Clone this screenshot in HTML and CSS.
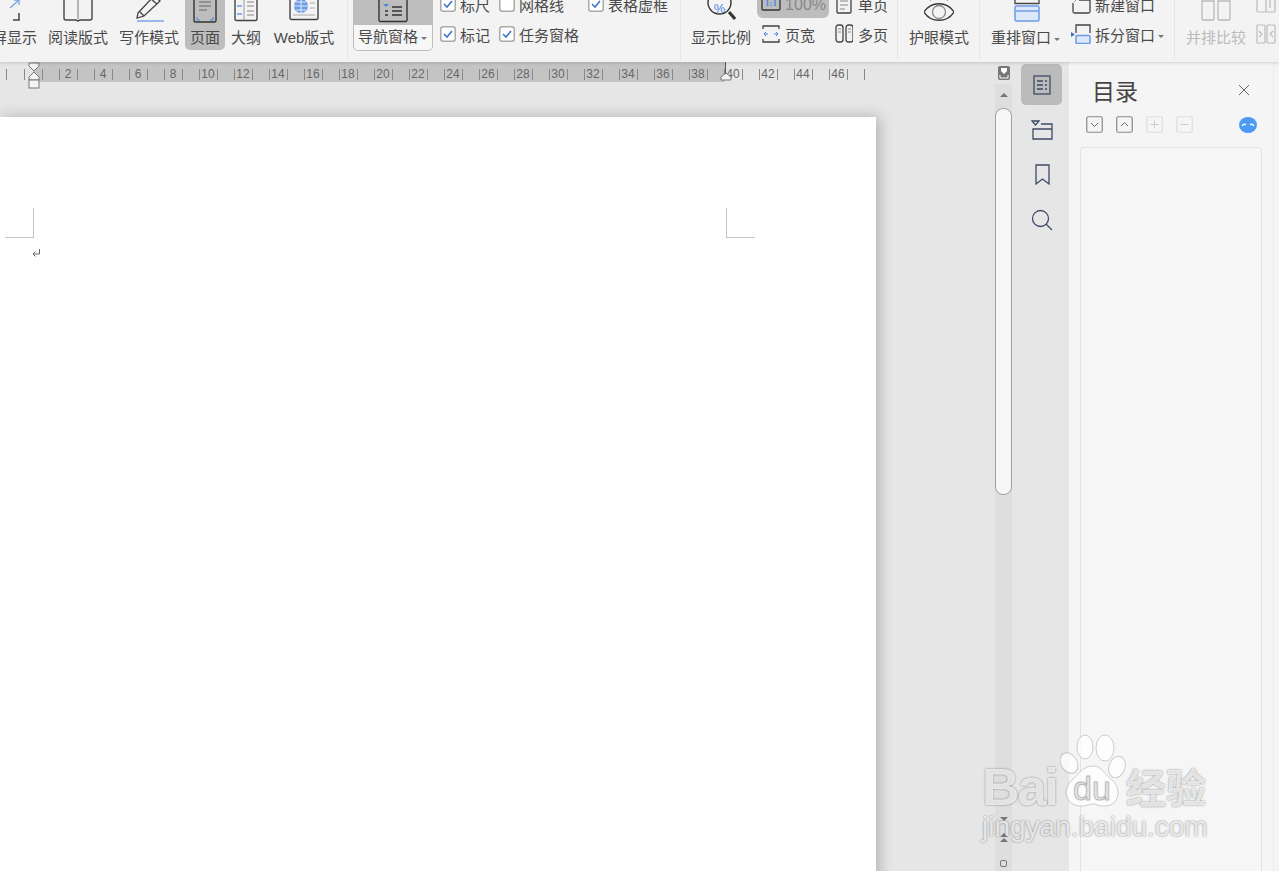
FILE: index.html
```html
<!DOCTYPE html>
<html>
<head>
	<meta charset="utf-8">
	<title>文档</title>
	<link rel="stylesheet" href="styles.css">
</head>
<body>
<!-- 顶部功能区 -->
<div class="ribbon">
	<div class="views">
		<div class="big">
			<svg width="30" height="30" viewBox="0 0 30 30" fill="none"><path d="M18 13l9-8M22 5h5v5M8 15l-6 6M2 16v5h5" stroke="#7aa5e6" stroke-width="1.300"/><path d="M21 25h6v-7" stroke="#444" stroke-width="1.500"/></svg>
			<span>全屏显示</span>
		</div>
		<div class="big">
			<svg class="up2" width="30" height="30" viewBox="0 0 30 30" fill="none" stroke="#444" stroke-width="1.4"><path d="M1 0v26a2 2 0 0 0 2 2h10l2 1 2-1h10a2 2 0 0 0 2-2V0"/><path d="M15 0v27" stroke="#999"/></svg>
			<span>阅读版式</span>
		</div>
		<div class="big">
			<svg class="up2" width="30" height="30" viewBox="0 0 30 30" fill="none" stroke="#444" stroke-width="1.3"><path d="M4 21 20 4l6 5-16 15-7 2z"/><path d="M17 7l6 5M6 20l4 4"/><path d="M3 29h27" stroke="#7aa5e6" stroke-width="1.5"/></svg>
			<span>写作模式</span>
		</div>
		<div class="big active">
			<svg width="30" height="30" viewBox="0 0 30 30" fill="none"><path d="M4 0v25.500a1.500 1.500 0 0 0 1.500 1.500h19a1.500 1.500 0 0 0 1.500-1.500V0" stroke="#333" stroke-width="1.4"/><path d="M9 7h12M9 11h12M9 15h8" stroke="#666"/><path d="M7 22v3h3M23 22v3h-3" stroke="#4a86e0"/></svg>
			<span>页面</span>
		</div>
		<div class="big">
			<svg width="30" height="30" viewBox="0 0 30 30" fill="none"><path d="M4 0v24a1.500 1.500 0 0 0 1.500 1.500h19a1.500 1.500 0 0 0 1.500-1.500V0" stroke="#444" stroke-width="1.400"/><path d="M13 0v25" stroke="#999"/><path d="M6 11h5M6 19h5" stroke="#6d9ce6" stroke-width="1.500"/><path d="M16 7h7M16 11h7M16 16h7M16 20h7" stroke="#888"/></svg>
			<span>大纲</span>
		</div>
		<div class="big big-web">
			<svg class="up2" width="30" height="30" viewBox="0 0 30 30" fill="none"><path d="M1 0v26a1.500 1.500 0 0 0 1.500 1.500h25a1.500 1.500 0 0 0 1.500-1.500V0" stroke="#444" stroke-width="1.400"/><circle cx="12" cy="14" r="7" fill="#6d9ce6"/><path d="M5 14h14M12 7v14M7 10h10M7 18h10" stroke="#fff" stroke-width=".8"/><path d="M21 11h5M21 16h5M4 23h22" stroke="#aaa"/></svg>
			<span>Web版式</span>
		</div>
	</div>
	<i class="sep sep-a"></i>
	<div class="nav">
		<div class="nav-top">
			<svg width="30" height="30" viewBox="0 0 30 30" fill="none"><path d="M1 0v25a1.500 1.500 0 0 0 1.500 1.500h25a1.500 1.500 0 0 0 1.500-1.500V0" stroke="#333" stroke-width="1.400"/><path d="M5 9h6l-3 3z" fill="#4a86e0"/><path d="M7 16h3M7 20h3M14 12h10M14 16h10M14 20h10" stroke="#333" stroke-width="1.300"/></svg>
		</div>
		<div class="nav-label">导航窗格<b class="caret"></b></div>
	</div>
	<div class="checks">
		<label class="check"><svg class="box" width="16" height="16" viewBox="0 0 16 16"><rect x=".75" y=".75" width="14.500" height="14.500" rx="2.500" fill="#fff" stroke="#aaa" stroke-width="1.500"/><path d="M4 8l3 3 5-6" fill="none" stroke="#3f74c9" stroke-width="1.600"/></svg>标尺</label>
		<label class="check"><svg class="box" width="16" height="16" viewBox="0 0 16 16"><rect x=".75" y=".75" width="14.500" height="14.500" rx="2.500" fill="#fff" stroke="#aaa" stroke-width="1.500"/></svg>网格线</label>
		<label class="check"><svg class="box" width="16" height="16" viewBox="0 0 16 16"><rect x=".75" y=".75" width="14.500" height="14.500" rx="2.500" fill="#fff" stroke="#aaa" stroke-width="1.500"/><path d="M4 8l3 3 5-6" fill="none" stroke="#3f74c9" stroke-width="1.600"/></svg>表格虚框</label>
		<label class="check"><svg class="box" width="16" height="16" viewBox="0 0 16 16"><rect x=".75" y=".75" width="14.500" height="14.500" rx="2.500" fill="#fff" stroke="#aaa" stroke-width="1.500"/><path d="M4 8l3 3 5-6" fill="none" stroke="#3f74c9" stroke-width="1.600"/></svg>标记</label>
		<label class="check"><svg class="box" width="16" height="16" viewBox="0 0 16 16"><rect x=".75" y=".75" width="14.500" height="14.500" rx="2.500" fill="#fff" stroke="#aaa" stroke-width="1.500"/><path d="M4 8l3 3 5-6" fill="none" stroke="#3f74c9" stroke-width="1.600"/></svg>任务窗格</label>
	</div>
	<i class="sep"></i>
	<div class="big ml5">
		<svg class="up2" width="30" height="30" viewBox="0 0 30 30" fill="none"><circle cx="13.500" cy="10.500" r="11.500" stroke="#333" stroke-width="1.400"/><path d="M23 20l6 7" stroke="#333" stroke-width="3"/><text x="13.500" y="20.500" class="pct">%</text></svg>
		<span>显示比例</span>
	</div>
	<div class="small-col col-zoom">
		<div class="row row-on">
			<svg width="20" height="20" viewBox="0 0 20 20" fill="none"><rect x="1" y="0" width="18" height="15" rx="1" stroke="#333" stroke-width="1.300"/><text x="4" y="11" class="ratio">1:1</text></svg>
			<span class="muted">100%</span>
		</div>
		<div class="row">
			<svg width="20" height="20" viewBox="0 0 20 20" fill="none"><path d="M2 5V2h16v3M2 15v3h16v-3" stroke="#444" stroke-width="1.300"/><path d="M3 10h4M13 10h4M5 8l-2 2 2 2M15 8l2 2-2 2" stroke="#4a86e0"/></svg>
			<span>页宽</span>
		</div>
	</div>
	<div class="small-col col-page">
		<div class="row">
			<svg width="18" height="20" viewBox="0 0 18 20" fill="none"><path d="M2 0v18a1 1 0 0 0 1 1h12a1 1 0 0 0 1-1V0" stroke="#444" stroke-width="1.300"/><path d="M5 7h8M5 11h8M5 15h5" stroke="#888"/></svg>
			<span>单页</span>
		</div>
		<div class="row">
			<svg width="18" height="20" viewBox="0 0 18 20" fill="none"><rect x="1" y="1" width="7" height="17" rx="2.500" stroke="#444" stroke-width="1.300"/><rect x="11" y="1" width="7" height="17" rx="2.500" stroke="#444" stroke-width="1.300"/><path d="M3 5h3M3 8h3M13 5h3M13 8h3" stroke="#888"/></svg>
			<span>多页</span>
		</div>
	</div>
	<i class="sep"></i>
	<div class="big ml6">
		<svg class="up2" width="30" height="30" viewBox="0 0 30 30" fill="none"><path d="M0 20C7 9 23 9 30 20 23 31 7 31 0 20z" stroke="#333" stroke-width="1.300"/><circle cx="15" cy="20" r="6.500" stroke="#888" stroke-width="1.300"/><path d="M6 8l1 1M15 7v1M24 8l-1 1" stroke="#7aa5e6"/></svg>
		<span>护眼模式</span>
	</div>
	<i class="sep sep-b"></i>
	<div class="big big-wide ml6">
		<svg width="30" height="30" viewBox="0 0 30 30" fill="none"><path d="M2 4v4.500h24V4" stroke="#444" stroke-width="1.300"/><rect x="2" y="11" width="24" height="15" rx="1.500" fill="#dce8fa" stroke="#6d9ce6" stroke-width="1.500"/><path d="M2 16h24" stroke="#6d9ce6" stroke-width="1.500"/></svg>
		<span>重排窗口<b class="caret"></b></span>
	</div>
	<div class="small-col col-win">
		<div class="row">
			<svg width="20" height="20" viewBox="0 0 20 20" fill="none"><path d="M2 9v8.500A1.500 1.500 0 0 0 3.500 19h14a1.500 1.500 0 0 0 1.500-1.500V6H8" stroke="#444" stroke-width="1.300"/><path d="M3 8l3-3" stroke="#7aa5e6"/></svg>
			<span>新建窗口</span>
		</div>
		<div class="row">
			<svg width="20" height="20" viewBox="0 0 20 20" fill="none"><path d="M0 8l4 2.500L0 13z" fill="#3f74c9"/><path d="M5 9V1h14v8" stroke="#444" stroke-width="1.300"/><rect x="5" y="11.500" width="14" height="8" rx="1" fill="#dce8fa" stroke="#6d9ce6" stroke-width="1.500"/></svg>
			<span>拆分窗口<b class="caret"></b></span>
		</div>
	</div>
	<i class="sep"></i>
	<div class="big ml6 off">
		<svg class="up2" width="30" height="30" viewBox="0 0 30 30" fill="none" stroke="#bbb" stroke-width="1.300"><path d="M1 0v27a1 1 0 0 0 1 1h10a1 1 0 0 0 1-1V0M17 0v27a1 1 0 0 0 1 1h10a1 1 0 0 0 1-1V0M1 9h12M17 9h12"/></svg>
		<span>并排比较</span>
	</div>
	<div class="small-col col-last">
		<div class="row">
			<svg width="20" height="20" viewBox="0 0 20 20" fill="none" stroke="#bbb" stroke-width="1.200"><path d="M1 0v17a1 1 0 0 0 1 1h16a1 1 0 0 0 1-1V0M10 0v18M14 6v8"/></svg>
		</div>
		<div class="row">
			<svg width="20" height="20" viewBox="0 0 20 20" fill="none" stroke="#bbb" stroke-width="1.200"><rect x="1" y="1" width="8" height="18" rx="1"/><rect x="11" y="1" width="8" height="18" rx="1"/><path d="M3 7l3 3-3 3M17 7l-3 3 3 3"/></svg>
		</div>
	</div>
</div>

<div class="main">
	<div class="workspace">
		<div class="ruler">
			<div class="cell half"></div>
			<div class="cell"><span></span></div>
			<div class="cell"><span>2</span></div>
			<div class="cell"><span>4</span></div>
			<div class="cell"><span>6</span></div>
			<div class="cell"><span>8</span></div>
			<div class="cell"><span>10</span></div>
			<div class="cell"><span>12</span></div>
			<div class="cell"><span>14</span></div>
			<div class="cell"><span>16</span></div>
			<div class="cell"><span>18</span></div>
			<div class="cell"><span>20</span></div>
			<div class="cell"><span>22</span></div>
			<div class="cell"><span>24</span></div>
			<div class="cell"><span>26</span></div>
			<div class="cell"><span>28</span></div>
			<div class="cell"><span>30</span></div>
			<div class="cell"><span>32</span></div>
			<div class="cell"><span>34</span></div>
			<div class="cell"><span>36</span></div>
			<div class="cell"><span>38</span></div>
			<div class="cell"><span>40</span></div>
			<div class="cell"><span>42</span></div>
			<div class="cell"><span>44</span></div>
			<div class="cell"><span>46</span></div>
			<div class="cell half"></div>
			<svg class="mark-left" width="14" height="27" viewBox="0 0 14 27" fill="#f4f4f4" stroke="#777"><path d="M2 1h10v3l-5 5-5-5z"/><path d="M7 10l5 5v3H2v-3z"/><rect x="2" y="18" width="10" height="8"/></svg>
			<svg class="mark-right" width="12" height="9" viewBox="0 0 12 9" fill="#f4f4f4" stroke="#777"><path d="M6 1l5 4v3H1V5z"/></svg>
			<i class="mark-line"></i>
		</div>
		<div class="canvas">
			<div class="page">
				<div class="corners">
					<i class="corner corner-l"></i>
					<i class="corner corner-r"></i>
				</div>
				<svg class="para" width="9" height="9" viewBox="0 0 9 9" fill="none" stroke="#666"><path d="M7.500 0v5H2"/><path d="M3.500 2.500 1 5l2.500 2.500"/></svg>
			</div>
		</div>
	</div>

	<div class="scroll">
		<svg class="scroll-top" width="12" height="14" viewBox="0 0 12 14"><rect width="12" height="14" rx="2" fill="#777"/><path d="M3 2h6v3L6 8 3 5z" fill="#fff"/><path d="M2 9v3h8V9" fill="none" stroke="#fff"/></svg>
		<i class="arrow-up"></i>
		<div class="thumb"></div>
		<div class="scroll-bottom">
			<i class="arrow-down"></i>
			<i class="arrow-up"></i>
			<i class="arrow-up tight"></i>
			<i class="dot"></i>
		</div>
	</div>

	<div class="tabs">
		<div class="tab tab-on">
			<svg width="20" height="20" viewBox="0 0 20 20" fill="none" stroke="#3f4a66" stroke-width="1.300"><rect x="2" y="1" width="16" height="18"/><path d="M5 6h6M13 6h2M5 10h6M13 10h2M5 14h6M13 14h2"/></svg>
		</div>
		<div class="tab">
			<svg width="22" height="20" viewBox="0 0 22 20" fill="none" stroke="#3f4a66" stroke-width="1.300"><path d="M1 1h7L4.500 5z"/><path d="M10 4h11v15H2V9h19"/></svg>
		</div>
		<div class="tab">
			<svg width="18" height="22" viewBox="0 0 18 22" fill="none" stroke="#3f4a66" stroke-width="1.300"><path d="M3 1h13v19l-6.500-5L3 20z"/></svg>
		</div>
		<div class="tab">
			<svg width="22" height="22" viewBox="0 0 22 22" fill="none" stroke="#3f4a66" stroke-width="1.300"><circle cx="9.500" cy="9.500" r="8"/><path d="M15 15l6 6"/></svg>
		</div>
	</div>

	<div class="panel">
		<div class="panel-head">
			<span class="panel-title">目录</span>
			<svg width="12" height="12" viewBox="0 0 12 12" stroke="#666"><path d="M1 1l10 10M11 1 1 11"/></svg>
		</div>
		<div class="panel-tools">
			<svg class="tool" width="17" height="17" viewBox="0 0 17 17" fill="none" stroke="#888"><rect x=".75" y=".75" width="15.500" height="15.500" rx="1.500" stroke-width="1.200"/><path d="M5 7l3.500 3.500L12 7" stroke="#666"/></svg>
			<svg class="tool" width="17" height="17" viewBox="0 0 17 17" fill="none" stroke="#888"><rect x=".75" y=".75" width="15.500" height="15.500" rx="1.500" stroke-width="1.200"/><path d="M5 10l3.500-3.500L12 10" stroke="#666"/></svg>
			<svg class="tool" width="17" height="17" viewBox="0 0 17 17" fill="none" stroke="#ddd"><rect x=".75" y=".75" width="15.500" height="15.500" rx="1.500" stroke-width="1.200"/><path d="M8.500 4.500v8M4.500 8.500h8" stroke="#ccc"/></svg>
			<svg class="tool" width="17" height="17" viewBox="0 0 17 17" fill="none" stroke="#ddd"><rect x=".75" y=".75" width="15.500" height="15.500" rx="1.500" stroke-width="1.200"/><path d="M4.500 8.500h8" stroke="#ccc"/></svg>
			<svg class="blob" width="18" height="16" viewBox="0 0 18 16"><ellipse cx="9" cy="8" rx="9" ry="8" fill="#4c9af5"/><path d="M3 9q2-3 4-1M11 8q2-2 4 1" fill="none" stroke="#fff" stroke-width="1.300"/></svg>
		</div>
		<div class="panel-box"></div>
	</div>
	<div class="panel-edge"></div>
</div>

<!-- 右下角水印 -->
<div class="mark">
	<div class="mark-top">
		<span class="mark-bai">Bai</span>
		<svg class="paw" width="66" height="76" viewBox="0 0 66 76" fill="#fff" fill-opacity=".75" stroke="#000" stroke-opacity=".18">
			<ellipse cx="9" cy="30" rx="8" ry="11" transform="rotate(-30 9 30)"/>
			<ellipse cx="25" cy="14" rx="8" ry="12"/>
			<ellipse cx="45" cy="15" rx="9" ry="13"/>
			<ellipse cx="57" cy="34" rx="8" ry="11" transform="rotate(20 57 34)"/>
			<path d="M33 33c9 0 11 8 19 14 9 7 9 26-8 26-6 0-7-2-11-2s-6 2-12 2C6 73 2 57 11 48c8-6 11-15 22-15z"/>
			<text x="13" y="67" class="paw-du">du</text>
		</svg>
		<span class="mark-jy">经验</span>
	</div>
	<div class="mark-url">jingyan.baidu.com</div>
</div>
</body>
</html>
```

FILE: styles.css
```css
*{margin: 0;padding: 0;box-sizing: border-box;}
html,body{height: 100%;overflow: hidden;}
body{display: flex;flex-direction: column;background: #e6e6e6;color: #4a4a4a;font-family: "Liberation Sans", "Noto Sans CJK SC", sans-serif;font-size: 15px;}

/* ribbon */
.ribbon{height: 62px;flex: none;display: flex;background: #f3f3f3;overflow: hidden;position: relative;z-index: 1;box-shadow: 0 1px 3px rgba(0,0,0,.15);}
.views{display: flex;gap: 1px;margin-left: -28px;}
.big{height: 50px;padding: 0 5px;flex: none;display: flex;flex-direction: column;justify-content: flex-end;align-items: center;white-space: nowrap;}
.big svg{flex: none;margin-bottom: 1px;}
.big svg.up2{margin-bottom: 4px;}
.big span{line-height: 24px;height: 24px;}
.big.active{background: #bdbdbd;border-radius: 0 0 5px 5px;}
.big.off{color: #bbb;}
.big-web{width: 74px;}
.big-wide{width: 79px;align-items: flex-start;}
.big-wide svg{margin-left: 22px;}
.ml5{margin-left: 5px;}
.ml6{margin-left: 6px;}
.sep{flex: none;width: 1px;height: 60px;background: #e6e6e6;}
.sep-a{margin-left: 6px;}
.sep-b{margin-left: 5px;}
.caret{display: inline-block;width: 0;height: 0;margin-left: 3px;border: 3px solid transparent;border-top: 3px solid #777;border-bottom: 0;vertical-align: middle;}

.nav{flex: none;width: 80px;height: 51px;margin-left: 5px;background: #bdbdbd;border-radius: 0 0 5px 5px;display: flex;flex-direction: column;}
.nav-top{height: 25px;display: flex;justify-content: center;align-items: flex-end;}
.nav-top svg{flex: none;margin-bottom: 0;}
.nav-label{height: 25px;margin: 0 1px 1px;background: #f7f7f7;border-radius: 0 0 4px 4px;line-height: 24px;padding-left: 4px;white-space: nowrap;}

.checks{flex: none;width: 241px;margin: -11px 0 0 6px;display: grid;grid-template-columns: 59px 89px 1fr;grid-auto-rows: 30px;}
.check{display: flex;align-items: center;gap: 4px;white-space: nowrap;}
.box{flex: none;margin-left: 1px;}

.small-col{flex: none;margin-top: -11px;display: flex;flex-direction: column;}
.row{height: 30px;display: flex;align-items: center;gap: 4px;white-space: nowrap;}
.col-zoom{width: 72px;margin-left: 1px;}
.col-zoom .row{padding-left: 4px;}
.row-on{background: #bdbdbd;height: 29px;margin-bottom: 1px;border-radius: 0 0 6px 6px;padding-top: 2px;}
.muted{color: #888;font-size: 16px;}
.col-page{width: 62px;margin-left: 6px;}
.col-page .row{gap: 5px;}
.col-win{width: 103px;margin-left: 6px;}
.col-last{margin-left: 5px;}
.pct{font-family: "Liberation Sans", sans-serif;font-size: 13px;fill: #4a86e0;stroke: none;text-anchor: middle;}
.ratio{font-family: "Liberation Serif", serif;font-size: 9px;font-weight: bold;fill: #4a86e0;}

/* work area */
.main{flex: 1;min-height: 0;display: flex;}
.workspace{width: 995px;flex: none;display: flex;flex-direction: column;overflow: hidden;}
.ruler{height: 20px;flex: none;display: flex;padding-left: 6px;position: relative;background: linear-gradient(to right, #e6e6e6 33px, #c4c4c4 33px, #c4c4c4 725px, #e6e6e6 725px);}
.cell{width: 35px;flex: none;height: 11px;margin-top: 7px;display: flex;color: #666;font-size: 12px;line-height: 11px;border-left: 1px solid #888;background: linear-gradient(#888,#888) 17px 0/1px 100% no-repeat;}
.cell span{width: 17px;text-align: center;}
.cell.half{width: 17.500px;background: none;}
.mark-left{position: absolute;left: 27px;top: 0;}
.mark-right{position: absolute;left: 720px;top: 10px;}
.mark-line{position: absolute;left: 725px;top: 0;width: 1px;height: 12px;background: #555;}

.canvas{flex: 1;min-height: 0;padding-top: 35px;overflow: hidden;background: #e6e6e6;}
.page{width: 876px;height: 900px;padding-top: 91px;background: #fff;box-shadow: 3px 0 14px rgba(0,0,0,.24);}
.corners{display: flex;justify-content: space-between;padding: 0 121px 0 5px;}
.corner{display: block;width: 29px;height: 30px;border-bottom: 1px solid #c4c4c4;}
.corner-l{border-right: 1px solid #c4c4c4;}
.corner-r{border-left: 1px solid #c4c4c4;}
.para{display: block;margin: 11px 0 0 32px;}

/* scrollbar */
.scroll{width: 17px;flex: none;background: linear-gradient(#e6e6e6 22px, #dedede 22px);display: flex;flex-direction: column;align-items: center;}
.scroll-top{flex: none;margin-top: 4px;}
.arrow-up,.arrow-down{display: block;flex: none;width: 0;height: 0;border: 4px solid transparent;border-top: 0;border-bottom: 4px solid #777;}
.arrow-down{border-bottom: 0;border-top: 4px solid #777;}
.scroll > .arrow-up{margin-top: 13px;}
.thumb{width: 17px;height: 387px;flex: none;margin-top: 11px;background: #f6f6f6;border: 1px solid #a0a0a0;border-radius: 8px;}
.scroll-bottom{flex: 1;display: flex;flex-direction: column;align-items: center;padding-top: 322px;}
.scroll-bottom .arrow-up{margin-top: 12px;}
.scroll-bottom .arrow-up.tight{margin-top: 1px;}
.dot{display: block;width: 7px;height: 7px;margin-top: 18px;border: 1px solid #777;border-radius: 2px;}

/* side tabs */
.tabs{width: 57px;flex: none;padding: 2px 7px 0 9px;display: flex;flex-direction: column;gap: 4.250px;}
.tab{height: 41px;flex: none;display: flex;align-items: center;justify-content: center;border-radius: 5px;}
.tab-on{background: #bbb;}

/* panel */
.panel{width: 205px;flex: none;padding: 0 11px;display: flex;flex-direction: column;background: #f5f5f5;border-right: 1px solid #ececec;}
.panel-head{height: 54px;flex: none;display: flex;justify-content: space-between;align-items: center;padding: 2px 12px 0 12px;}
.panel-title{font-size: 23px;color: #444;}
.panel-tools{height: 31px;flex: none;display: flex;align-items: flex-start;gap: 13px;margin-left: 6px;}
.tool{flex: none;}
.blob{margin-left: 33px;margin-top: 1px;flex: none;}
.panel-box{flex: 1;background: #f6f6f6;border: 1px solid #e2e2e2;border-bottom: 0;border-radius: 4px 4px 0 0;}
.panel-edge{flex: 1;background: #f4f4f4;}

/* watermark */
.mark{position: absolute;left: 982px;top: 733px;width: 230px;color: rgba(255,255,255,.8);text-shadow: 0 0 2px rgba(0,0,0,.5);}
.mark-top{display: flex;align-items: flex-end;height: 76px;}
.mark-bai{font-size: 52px;font-weight: bold;line-height: 44px;width: 78px;letter-spacing: -2px;}
.paw{flex: none;}
.paw-du{font-family: "Liberation Sans", sans-serif;font-size: 34px;fill: #fff;fill-opacity: .2;stroke: #000;stroke-opacity: .22;}
.mark-jy{font-family: "Noto Sans CJK SC", sans-serif;font-size: 40px;font-weight: bold;line-height: 46px;white-space: nowrap;}
.mark-url{font-size: 28px;line-height: 36px;white-space: nowrap;}
```
